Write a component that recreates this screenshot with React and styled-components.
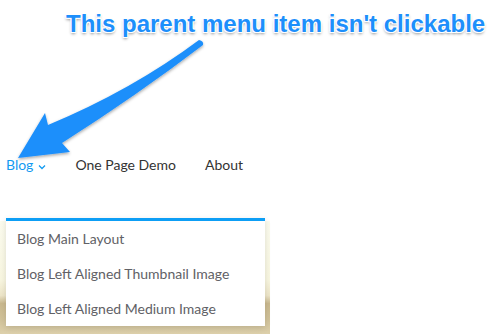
import React from 'react';
import styled, { createGlobalStyle } from 'styled-components';

const GlobalStyle = createGlobalStyle`
  html, body {
    margin: 0;
    padding: 0;
    background: #ffffff;
  }
  body {
    width: 496px;
    height: 334px;
    overflow: hidden;
    font-family: 'Lato', 'Liberation Sans', sans-serif;
  }
`;

const Page = styled.div`
  position: relative;
  width: 496px;
  height: 334px;
  display: flex;
  flex-direction: column;
`;

const Callout = styled.h1`
  margin: 0;
  padding: 10px 0 0 66px;
  height: 45px;
  box-sizing: border-box;
  font-family: 'Liberation Sans', Arial, sans-serif;
  font-weight: 700;
  font-size: 24px;
  line-height: 28px;
  color: #1d8ffb;
  white-space: nowrap;
  text-shadow:
    -1px -1px 0 #fff, 1px -1px 0 #fff, -1px 1px 0 #fff, 1px 1px 0 #fff,
    0 2px 3px rgba(0, 0, 0, 0.45);
`;

const ArrowLayer = styled.svg`
  position: absolute;
  left: 0;
  top: 0;
  width: 496px;
  height: 334px;
  pointer-events: none;
  z-index: 3;
  overflow: visible;
`;

const Nav = styled.nav`
  display: flex;
  align-items: center;
  margin-top: 109px;
  padding-left: 6px;
  height: 20px;
`;

const NavItem = styled.a`
  display: inline-flex;
  align-items: center;
  font-size: 14px;
  color: ${({ active }) => (active ? '#139bf1' : '#333333')};
  text-decoration: none;
  margin-right: ${({ gap }) => gap}px;
  white-space: nowrap;
`;

const Caret = styled.svg`
  width: 8px;
  height: 6px;
  margin-left: 5px;
  margin-top: 5px;
`;

const Hero = styled.section`
  position: relative;
  margin-top: 47px;
  width: 270px;
  flex: 1;
  background: linear-gradient(
    180deg,
    #fbfbee 0%,
    #f8f6e0 52%,
    #ede5c8 66%,
    #c9b88e 73%,
    #d0c198 86%,
    #ddd0ab 100%
  );
`;

const Dropdown = styled.ul`
  position: absolute;
  left: 6px;
  top: -3px;
  width: 259px;
  margin: 0;
  padding: 0;
  list-style: none;
  background: #ffffff;
  border-top: 3px solid #0d9ef5;
  box-shadow: 0 2px 6px rgba(0, 0, 0, 0.12);
`;

const DropItem = styled.li`
  padding: 0 0 0 11px;
  height: 35px;
  line-height: 35px;
  font-size: 14px;
  color: #616166;
  white-space: nowrap;
`;

const App = () => (
  <Page>
    <GlobalStyle />
    <Callout>This parent menu item isn't clickable</Callout>
    <Nav>
      <NavItem active gap={29}>
        Blog
        <Caret viewBox="0 0 8 6">
          <path d="M1 1.5 L4 4.5 L7 1.5" fill="none" stroke="#139bf1" strokeWidth="1.3" />
        </Caret>
      </NavItem>
      <NavItem gap={29}>One Page Demo</NavItem>
      <NavItem gap={0}>About</NavItem>
    </Nav>
    <Hero>
      <Dropdown>
        <DropItem>Blog Main Layout</DropItem>
        <DropItem>Blog Left Aligned Thumbnail Image</DropItem>
        <DropItem>Blog Left Aligned Medium Image</DropItem>
      </Dropdown>
    </Hero>
    <ArrowLayer viewBox="0 0 496 334">
      <defs>
        <filter id="arrowShadow" x="-10%" y="-10%" width="130%" height="130%">
          <feDropShadow dx="0" dy="1.5" stdDeviation="1.5" floodColor="#000" floodOpacity="0.35" />
        </filter>
      </defs>
      <path
        d="M199 40 Q132 90 48 125 L45 113 L18 158 L70 152 L62 143 Q136 96 203 45 Q204 41 199 40 Z"
        fill="#1d8ffb"
        filter="url(#arrowShadow)"
      />
    </ArrowLayer>
  </Page>
);

export default App;
